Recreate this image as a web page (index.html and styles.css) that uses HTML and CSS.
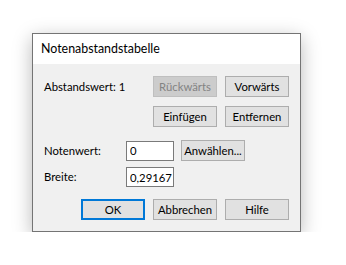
FILE: index.html
```html
<!DOCTYPE html>
<html>
<head>
<meta charset="utf-8">
<link rel="stylesheet" href="styles.css">
</head>
<body>
<div class="stage">
  <div class="dialog">
    <div class="titlebar">Notenabstandstabelle</div>
    <div class="content">
      <div class="row">
        <span class="label grow">Abstandswert: 1</span>
        <button class="btn" disabled>Rückwärts</button>
        <button class="btn">Vorwärts</button>
      </div>
      <div class="row end r2">
        <button class="btn">Einfügen</button>
        <button class="btn">Entfernen</button>
      </div>
      <div class="row r3">
        <span class="label fixed">Notenwert:</span>
        <input class="field" type="text" value="0">
        <button class="btn pick">Anwählen...</button>
      </div>
      <div class="row r4">
        <span class="label fixed">Breite:</span>
        <input class="field" type="text" value="0,29167">
      </div>
      <div class="row end r5">
        <button class="btn default">OK</button>
        <button class="btn">Abbrechen</button>
        <button class="btn">Hilfe</button>
      </div>
    </div>
  </div>
</div>
</body>
</html>
```

FILE: styles.css
```css
html, body {
  margin: 0;
  padding: 0;
  background: #ffffff;
}
.stage {
  padding: 33px 0 0 32px;
}
.dialog {
  box-sizing: border-box;
  width: 269px;
  height: 199px;
  border: 1px solid #747474;
  background: #f0f0f0;
  box-shadow: 0 5px 18px rgba(0,0,0,0.28);
  font-family: Lato, "Noto Sans", sans-serif;
  font-size: 11.3px;
  color: #000;
}
.titlebar {
  height: 30px;
  background: #fff;
  padding-left: 8px;
  font-size: 12.4px;
  line-height: 29px;
  color: #000;
}
.content {
  padding: 12px 11px 0 11px;
}
.row {
  display: flex;
  align-items: center;
  gap: 8px;
}
.end { justify-content: flex-end; }
.grow { flex: 1; }
.r2 { margin-top: 9px; }
.r3 { margin-top: 13px; gap: 0; }
.r4 { margin-top: 6px; gap: 0; }
.r5 { margin-top: 12px; }
.label {
  line-height: 16px;
}
.fixed {
  width: 82px;
}
.btn {
  box-sizing: border-box;
  width: 64px;
  height: 21px;
  margin: 0;
  padding: 0;
  border: 1px solid #adadad;
  background: #e1e1e1;
  font-family: inherit;
  font-size: 11.3px;
  color: #000;
  line-height: 18px;
}
.btn:disabled {
  background: #cccccc;
  border-color: #bfbfbf;
  color: #838383;
}
.btn.default {
  border: 2px solid #0078d7;
}
.pick {
  margin-left: 7px;
}
.field {
  box-sizing: border-box;
  width: 48px;
  height: 20px;
  margin: 0;
  padding: 0 0 0 3px;
  border: 1px solid #7a7a7a;
  background: #fff;
  font-family: inherit;
  font-size: 11.3px;
  color: #000;
  outline: none;
}
```
